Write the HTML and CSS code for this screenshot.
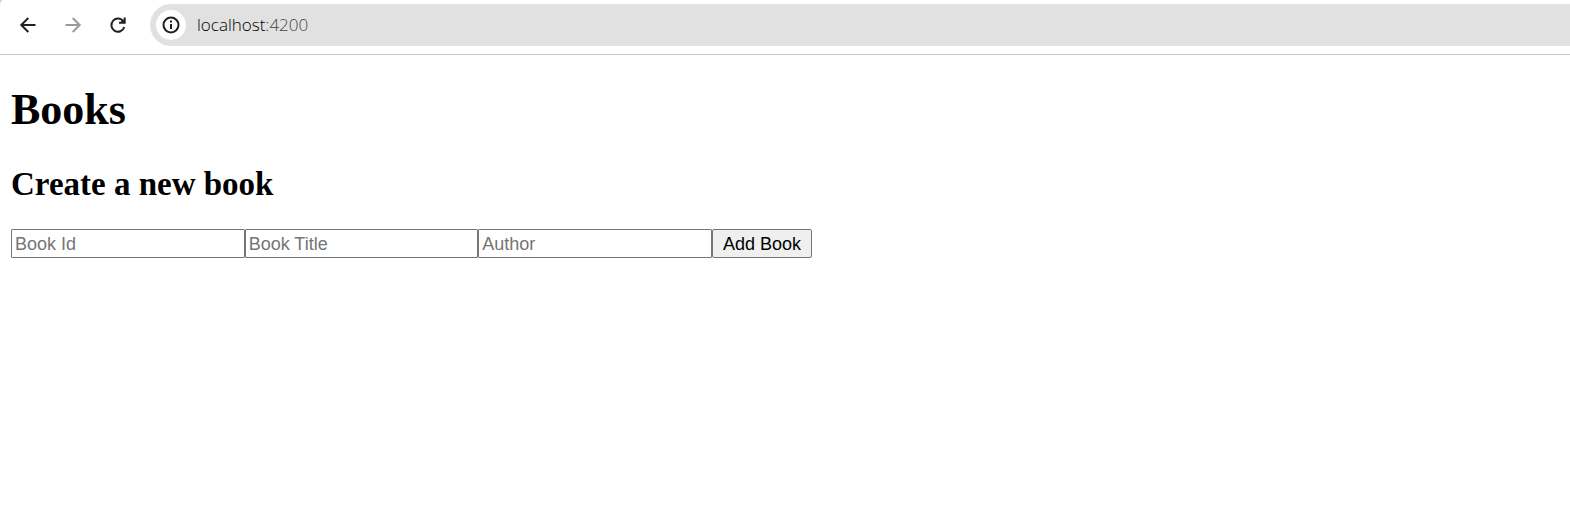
FILE: index.html
```html
<!DOCTYPE html>
<html lang="en">
<head>
<meta charset="utf-8">
<title>Books</title>
<link rel="stylesheet" href="styles.css">
</head>
<body>
<div class="frame">
<header class="toolbar">
  <nav class="nav">
    <button class="nav-button" type="button" aria-label="Back">
      <svg class="icon" viewBox="0 0 22 22"><path d="M18.500 11H5M11.300 4L4.300 11l7 7"/></svg>
    </button>
    <button class="nav-button nav-button-off" type="button" aria-label="Forward" disabled>
      <svg class="icon" viewBox="0 0 22 22"><path d="M3.500 11H17M10.700 4l7 7-7 7"/></svg>
    </button>
    <button class="nav-button" type="button" aria-label="Reload">
      <svg class="icon" viewBox="0 0 22 22"><path d="M16.500 7.500A6.600 6.600 0 1 0 17.300 13M12 8.700h5.700V3.500M14 8.700l3.700-3"/></svg>
    </button>
  </nav>
  <div class="address">
    <button class="site-info" type="button" aria-label="Site information">
      <svg class="icon" viewBox="0 0 22 22"><circle cx="11" cy="11" r="7.500"/><path d="M11 10v5M11 6.500v2"/></svg>
    </button>
    <span class="url">localhost<span class="port">:4200</span></span>
  </div>
</header>
</div>
<main class="page">
  <h1 class="title">Books</h1>
  <h2 class="subtitle">Create a new book</h2>
  <form class="form">
    <input class="field" type="text" placeholder="Book Id" aria-label="Book Id">
    <input class="field" type="text" placeholder="Book Title" aria-label="Book Title">
    <input class="field" type="text" placeholder="Author" aria-label="Author">
    <button class="submit" type="button">Add Book</button>
  </form>
</main>
</body>
</html>
```
FILE: styles.css
```css
body {
  margin: 0;
  background: #fff;
  color: #000;
  font-family: "Liberation Serif", "Times New Roman", serif;
}
.frame {
  background: #b9e3a5;
}
.toolbar {
  display: flex;
  align-items: center;
  gap: 10px;
  height: 42px;
  padding: 4px 0 8px 6px;
  border-bottom: 1px solid #c8c8c8;
  border-top-left-radius: 3px 6px;
  background: #fff;
}
.nav {
  display: flex;
  gap: 1px;
}
.nav-button,
.site-info {
  display: flex;
  align-items: center;
  justify-content: center;
  padding: 0;
  border: 0;
  background: none;
  color: #202124;
}
.nav-button {
  width: 44px;
  height: 42px;
}
.nav-button-off {
  color: #9a9a9a;
}
.icon {
  width: 22px;
  height: 22px;
  fill: none;
  stroke: currentColor;
  stroke-width: 2;
}
.address {
  display: flex;
  flex: 1;
  align-items: center;
  gap: 11px;
  height: 42px;
  padding-left: 6px;
  border-radius: 21px 0 0 21px;
  background: #e1e1e1;
}
.site-info {
  width: 30px;
  height: 30px;
  border-radius: 50%;
  background: #fff;
}
.url {
  color: #000;
  font: 300 17px/24px "Open Sans", "Segoe UI", sans-serif;
}
.port {
  color: #444;
}
.page {
  padding: 0 11px;
}
.title {
  margin: 29px 0;
  font-size: 44px;
  line-height: 52px;
}
.subtitle {
  margin: 0 0 26px;
  font-size: 33px;
  line-height: 38px;
}
.form {
  display: grid;
  grid-template-columns: repeat(3, 1fr) 100px;
  max-width: 801px;
}
.field,
.submit {
  box-sizing: border-box;
  min-width: 0;
  height: 29px;
  border: 1px solid #767676;
  border-radius: 2px;
  font: 18px/24px "Liberation Sans", Arial, sans-serif;
}
.field {
  padding: 1px 3px 0;
  border-radius: 1px;
}
.field::placeholder {
  color: #757575;
}
.submit {
  padding: 0 8px;
  background: #efefef;
  color: #000;
}
```
